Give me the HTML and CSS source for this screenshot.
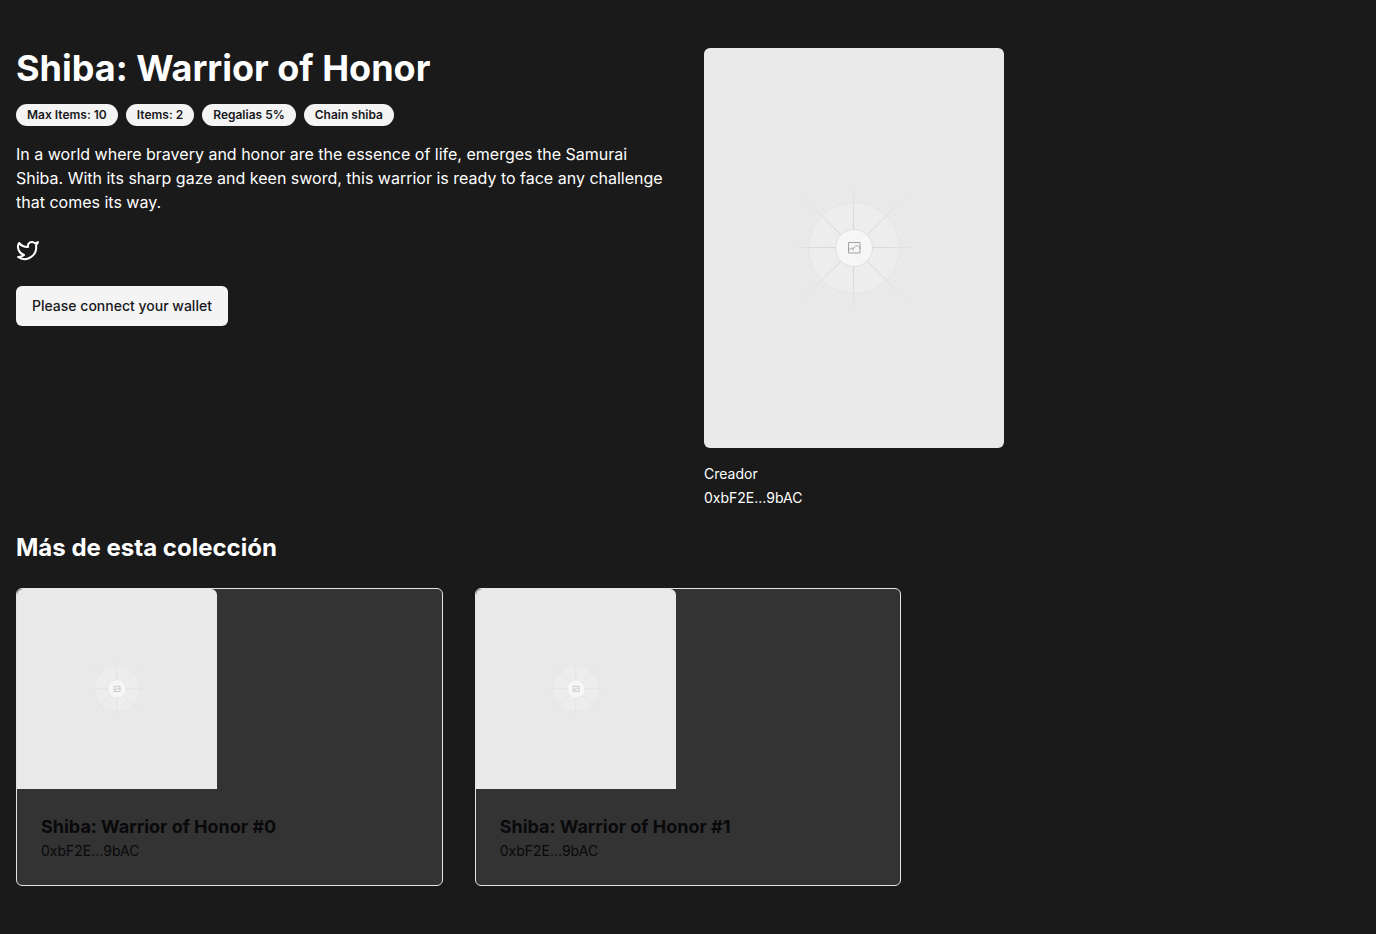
FILE: index.html
```html
<!DOCTYPE html>
<html lang="es">
<head>
<meta charset="utf-8">
<meta name="viewport" content="width=device-width, initial-scale=1">
<title>Shiba: Warrior of Honor</title>
<link rel="stylesheet" href="styles.css">
</head>
<body>
<svg class="defs" aria-hidden="true">
  <defs>
    <radialGradient id="fade" gradientUnits="userSpaceOnUse" cx="0" cy="0" r="64">
      <stop offset="0.3" stop-color="#d6d6d6"/>
      <stop offset="0.7" stop-color="#dedede"/>
      <stop offset="1" stop-color="#e9e9e9"/>
    </radialGradient>
    <radialGradient id="fade-diagonal" gradientUnits="userSpaceOnUse" cx="0" cy="0" r="84">
      <stop offset="0.2" stop-color="#d8d8d8"/>
      <stop offset="0.65" stop-color="#dfdfdf"/>
      <stop offset="1" stop-color="#e9e9e9"/>
    </radialGradient>
    <symbol id="placeholder" viewBox="-64 -64 128 128">
      <circle r="45.5" fill="#ededed" stroke="#e5e5e5"/>
      <path d="M-64-.5H64M-.5-64V64" stroke="url(#fade)" fill="none"/>
      <path d="M-58-58L58 58M-58 58L58-58" stroke="url(#fade-diagonal)" fill="none"/>
      <circle r="18.5" fill="#f6f6f6" stroke="#dfdfdf"/>
      <path d="M-5.500-5.500h11.500v10.500h-11.500zM-5.500 2.500l2.500-2.500 1.500.2 1 1M-1 2.500c-.5-2 .5-3 1.500-3 .5-2 3.500-2.500 4.500-.5 1 0 1.500 1 1 2" fill="none" stroke="#a3a3a3"/>
    </symbol>
  </defs>
</svg>
<main class="page">
  <section class="hero">
    <div class="info">
      <h1 class="title">Shiba: Warrior of Honor</h1>
      <div class="badges">
        <span class="badge">Max Items: 10</span>
        <span class="badge">Items: 2</span>
        <span class="badge">Regalias 5%</span>
        <span class="badge">Chain shiba</span>
      </div>
      <p class="description">In a world where bravery and honor are the essence of life, emerges the Samurai Shiba. With its sharp gaze and keen sword, this warrior is ready to face any challenge that comes its way.</p>
      <a class="social" href="#" aria-label="Twitter">
        <svg width="24" height="24" viewBox="0 0 24 24" fill="none" stroke="currentColor" stroke-width="2" stroke-linecap="round" stroke-linejoin="round"><path d="M22 4s-.7 2.100-2 3.400c1.600 10-9.400 17.300-18 11.600 2.200.1 4.400-.6 6-2C3 15.500.5 9.600 3 5c2.200 2.600 5.600 4.100 9 4-.9-4.200 4-6.600 7-3.800 1.100 0 3-1.200 3-1.200z"/></svg>
      </a>
      <button class="connect" type="button">Please connect your wallet</button>
    </div>
    <div class="preview">
      <div class="cover"><svg class="cover-art" aria-hidden="true"><use href="#placeholder"/></svg></div>
      <div class="creator"><span>Creador</span><span>0xbF2E...9bAC</span></div>
    </div>
  </section>
  <section class="collection">
    <h2 class="subtitle">Más de esta colección</h2>
    <div class="cards">
      <article class="card">
        <div class="thumb"><svg class="thumb-art" aria-hidden="true"><use href="#placeholder"/></svg></div>
        <div class="card-body"><h3 class="card-title">Shiba: Warrior of Honor #0</h3><p class="owner">0xbF2E...9bAC</p></div>
      </article>
      <article class="card">
        <div class="thumb"><svg class="thumb-art" aria-hidden="true"><use href="#placeholder"/></svg></div>
        <div class="card-body"><h3 class="card-title">Shiba: Warrior of Honor #1</h3><p class="owner">0xbF2E...9bAC</p></div>
      </article>
    </div>
  </section>
</main>
</body>
</html>
```

FILE: styles.css
```css
* { box-sizing: border-box; }
body {
  margin: 0;
  background: #1a1a1a;
  color: #fff;
  font-family: Inter, "Liberation Sans", sans-serif;
  font-size: 16px;
  line-height: 24px;
}
h1, h2, h3, p { margin: 0; }
.defs { position: absolute; width: 0; height: 0; }
.page {
  display: flex;
  flex-direction: column;
  gap: 24px;
  padding: 48px 16px;
}
.hero {
  display: grid;
  grid-template-columns: repeat(2, minmax(0, 1fr));
  gap: 32px;
}
.info { display: flex; flex-direction: column; align-items: flex-start; }
.title { font-size: 36px; line-height: 40px; font-weight: 700; }
.badges { display: flex; flex-wrap: wrap; gap: 8px; margin: 16px 0; }
.badge {
  padding: 2px 10px;
  border: 1px solid transparent;
  border-radius: 11px;
  background: #f4f4f5;
  color: #18181b;
  font-size: 12px;
  line-height: 16px;
  font-weight: 600;
}
.social { display: flex; margin: 24px 0; color: inherit; }
.connect {
  height: 40px;
  padding: 8px 16px;
  border: 0;
  border-radius: 6px;
  background: #f4f4f5;
  color: #18181b;
  font-family: inherit;
  font-size: 14px;
  line-height: 20px;
  font-weight: 500;
}
.preview { display: flex; flex-direction: column; gap: 16px; }
.cover, .thumb { display: flex; align-items: center; justify-content: center; background: #e9e9e9; }
.cover { width: 300px; height: 400px; border-radius: 6px; }
.cover-art { width: 128px; height: 128px; }
.creator { display: flex; flex-direction: column; gap: 4px; font-size: 14px; line-height: 20px; }
.subtitle { font-size: 24px; line-height: 32px; font-weight: 700; }
.collection { display: flex; flex-direction: column; gap: 24px; }
.cards { display: grid; grid-template-columns: repeat(3, minmax(0, 1fr)); gap: 32px; }
.card { border: 1px solid #e4e4e7; border-radius: 6px; background: #333; color: #09090b; }
.thumb { width: 200px; height: 200px; border-radius: 6px 6px 0 0; }
.thumb-art { width: 64px; height: 64px; }
.card-body { padding: 24px; }
.card-title { font-size: 18px; line-height: 28px; font-weight: 700; }
.owner { font-size: 14px; line-height: 20px; }
```
